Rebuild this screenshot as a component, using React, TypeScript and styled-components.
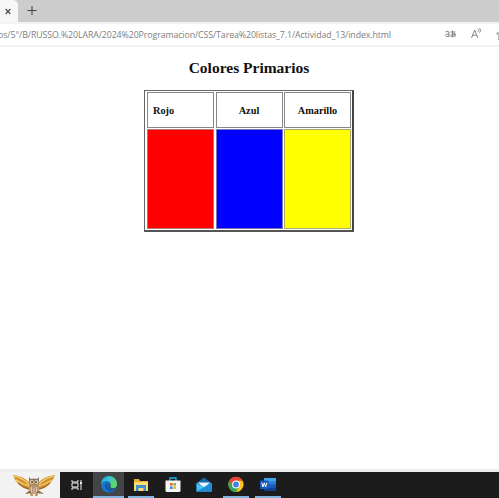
import React from "react";
import styled, { createGlobalStyle } from "styled-components";

const GlobalStyle = createGlobalStyle`
  * { box-sizing: border-box; }
  body { margin: 0; background: #fff; overflow: hidden; }
`;

const Window = styled.div`
  width: 499px;
  height: 498px;
  display: flex;
  flex-direction: column;
  overflow: hidden;
  background: #fff;
`;

const TabStrip = styled.div`
  height: 22px;
  flex: none;
  display: flex;
  background: #cdcdcd;
`;

const Tab = styled.div`
  width: 18px;
  height: 22px;
  background: #f7f7f7;
  border-top-right-radius: 5px;
`;

const NewTab = styled.div`
  width: 28px;
  height: 22px;
`;

const AddressBar = styled.div`
  height: 25px;
  flex: none;
  display: flex;
  align-items: center;
  border-top: 2px solid #f3f3f3;
  border-bottom: 2px solid #f3f3f3;
`;

const Url = styled.div`
  width: 391px;
  flex: none;
  display: flex;
  justify-content: flex-end;
  white-space: nowrap;
  font: 8.8px/16px "Open Sans", sans-serif;
  letter-spacing: -0.1px;
  color: #808080;
`;

const Tools = styled.div`
  width: 108px;
  height: 21px;
  overflow: hidden;
`;

const Page = styled.main`
  flex: 1;
  display: flex;
  flex-direction: column;
  align-items: center;
  padding-right: 1px;
  font-family: "Liberation Serif", "Times New Roman", serif;
  color: #111;
`;

const Title = styled.h1`
  margin: 12px 0 13px;
  font-size: 15.5px;
  line-height: 18px;
  font-weight: 700;
`;

const ColorTable = styled.div`
  width: 210px;
  height: 142px;
  display: grid;
  grid-template-columns: 67px 67px 67px;
  grid-template-rows: 36px 100px;
  column-gap: 1.5px;
  row-gap: 1px;
  padding: 1px 0 0 2px;
  border: 1px solid #666;
  border-right: 2px solid #444;
  border-bottom: 2px solid #555;
`;

const HeadCell = styled.div<{ $left?: boolean }>`
  display: flex;
  align-items: center;
  justify-content: ${(p) => (p.$left ? "flex-start" : "center")};
  padding-left: ${(p) => (p.$left ? 5 : 0)}px;
  border: 1px solid #888;
  font-size: 10.3px;
  font-weight: 700;
`;

const Swatch = styled.div<{ $color: string; $edge: string }>`
  background: ${(p) => p.$color};
  border: 1px solid ${(p) => p.$edge};
`;

const PageEdge = styled.div`
  height: 3px;
  flex: none;
  background: #ececec;
`;

const Taskbar = styled.footer`
  height: 26px;
  flex: none;
  display: flex;
  background: #1c1c1c;
`;

const SearchBox = styled.div`
  width: 60px;
  background: #f2f2f2;
  display: flex;
  padding-left: 12px;
`;

const TaskView = styled.div`
  width: 33px;
  display: flex;
  justify-content: center;
`;

const Task = styled.div<{ $active?: boolean; $open?: boolean }>`
  width: ${(p) => (p.$active ? 31 : 26)}px;
  margin-right: ${(p) => (p.$active ? 4 : 5.7)}px;
  display: flex;
  justify-content: center;
  background: ${(p) => (p.$active ? "#424446" : "transparent")};
  border-bottom: 2px solid ${(p) => (p.$open ? "#80b5e4" : "transparent")};
`;

const Picture = styled.svg`
  display: block;
  flex: none;
`;

const Owl = () => (
  <Picture width="44" height="26" viewBox="0 0 44 26">
    <g strokeLinejoin="round">
      <path d="M1 3Q12 4 19 12L17 18Q5 15 1 3Z" fill="#cf8d2e" />
      <path d="M43 3Q32 4 25 12L27 18Q39 15 43 3Z" fill="#cf8d2e" />
      <path d="M2 4Q11 6 18 13M4 8Q10 12 17 14M42 4Q33 6 26 13M40 8Q34 12 27 14" fill="none" stroke="#f0c563" strokeWidth="1.6" />
      <path d="M6 11Q11 16 17 17M38 11Q33 16 27 17" fill="none" stroke="#94642c" strokeWidth="1" />
      <path d="M18 18l-5 4 7-1M26 18l6 4-8-1" fill="#8b684a" />
      <ellipse cx="22" cy="14.5" rx="5" ry="7.5" fill="#b49272" />
      <path d="M17 5l2 2q3-1 6 0l2-2v6q-2 3-5 1-3 2-5-1Z" fill="#8b7462" />
      <circle cx="19.7" cy="10" r="2" fill="#e8d8b8" />
      <circle cx="24.3" cy="10" r="2" fill="#e8d8b8" />
      <circle cx="20" cy="10" r=".9" fill="#4b3424" />
      <circle cx="24" cy="10" r=".9" fill="#4b3424" />
      <path d="M21 11h2l-1 3Z" fill="#cb8c2b" />
      <path d="M19.5 15v5M22 16v5M24.5 15v5" stroke="#dfcbb0" strokeWidth="1" />
      <path d="M19 21v2h2M25 21v2h-2" fill="none" stroke="#b77b2d" strokeWidth="1.3" />
    </g>
  </Picture>
);

const Edge = () => (
  <Picture width="18" height="24" viewBox="0 0 18 24">
    <defs>
      <linearGradient id="edgeTop" x1="0" y1="0" x2="1" y2="0.5">
        <stop stopColor="#2197de" /><stop offset="0.5" stopColor="#36c5d2" /><stop offset="1" stopColor="#65da58" />
      </linearGradient>
    </defs>
    <circle cx="9" cy="12.5" r="8" fill="#1779ce" />
    <path d="M1 12A8 8 0 0 1 17 12Q17 16 12.5 16Q9.5 16 10.5 13.5Q11 9 6.5 9Q2.5 9 1 12Z" fill="url(#edgeTop)" />
    <path d="M7 10Q3 14 7 18Q11 22 16 16.5Q11 19 8.5 15.5Q7 13 7 10Z" fill="#1459a5" />
    <path d="M8.5 11Q11 11 10.3 14Q9.8 16 12.5 16.3Q15 16.5 16.5 15.5Q14.6 17.5 11.7 17Q8 16 8.5 11Z" fill="#424446" />
  </Picture>
);

const Explorer = () => (
  <Picture width="16" height="24" viewBox="0 0 16 24">
    <path d="M1 7h5l1 2h8v10H1Z" fill="#e7ad36" />
    <path d="M1 10h14v9H1Z" fill="#ffdc73" />
    <path d="M3 13h10v6h-2.5v-3h-5v3H3Z" fill="#3c91cc" />
  </Picture>
);

const Store = () => (
  <Picture width="16" height="24" viewBox="0 0 16 24">
    <path d="M5 9V6h6v3" fill="none" stroke="#25aeea" strokeWidth="1.4" />
    <path d="M.5 8.5h15v10q0 1.5-1.5 1.5H2Q.5 20 .5 18.5Z" fill="#f5f5f5" />
    <path d="M5 11h2.6v2.6H5Z" fill="#ef5737" /><path d="M8.4 11H11v2.6H8.4Z" fill="#83b72d" />
    <path d="M5 14.4h2.6V17H5Z" fill="#2095d7" /><path d="M8.4 14.4H11V17H8.4Z" fill="#f5b31b" />
  </Picture>
);

const Mail = () => (
  <Picture width="16" height="24" viewBox="0 0 16 24">
    <path d="M.5 11 8 5.5l7.5 5.5v8.5H.5Z" fill="#1566aa" />
    <path d="M2 10.5h12L8 16Z" fill="#e9f6ff" />
    <path d="M.5 11 8 15l7.5-4v8.5H.5Z" fill="#45c3f5" />
    <path d="M.5 19.5 15.5 11v8.5Z" fill="#208bd7" />
  </Picture>
);

const Chrome = () => (
  <Picture width="16" height="24" viewBox="0 0 16 24">
    <circle cx="8" cy="12.5" r="7.6" fill="#fbc31b" />
    <path d="M1.4 8.7A7.6 7.6 0 0 1 14.6 8.7H8L4.7 14.4Z" fill="#e74435" />
    <path d="M1.4 8.7A7.6 7.6 0 0 0 8 20.1L11.3 14.4 8 16.3 4.7 14.4Z" fill="#34a553" />
    <circle cx="8" cy="12.5" r="3.9" fill="#fff" />
    <circle cx="8" cy="12.5" r="2.9" fill="#3f81e4" />
  </Picture>
);

const Word = () => (
  <Picture width="16" height="24" viewBox="0 0 16 24">
    <rect x="4" y="6" width="12" height="13" rx="1" fill="#2b7cd3" />
    <path d="M4 6h12v3.3H4Z" fill="#41a5ee" /><path d="M4 12.5h12V16H4Z" fill="#185abd" />
    <path d="M4 16h12v3H4Z" fill="#103f91" />
    <rect y="8.5" width="8.5" height="8.5" rx=".8" fill="#185abd" />
    <path d="m1.8 10.7 1.1 4.2 1.4-4 1.4 4 1.1-4.2" fill="none" stroke="#fff" strokeWidth="1" />
  </Picture>
);

export default function App() {
  return (
    <>
      <GlobalStyle />
      <Window>
        <TabStrip>
          <Tab>
            <Picture width="18" height="22" viewBox="0 0 18 22">
              <path d="m5.6 9 4.8 5m0-5-4.8 5" stroke="#444" strokeWidth="1.1" />
            </Picture>
          </Tab>
          <NewTab>
            <Picture width="28" height="22" viewBox="0 0 28 22">
              <path d="M9.5 10.5h9M14 6v9" stroke="#444" strokeWidth="1.1" />
            </Picture>
          </NewTab>
        </TabStrip>
        <AddressBar>
          <Url>os/5°/B/RUSSO.%20LARA/2024%20Programacion/CSS/Tarea%20listas_7.1/Actividad_13/index.html</Url>
          <Tools>
            <Picture width="108" height="21" viewBox="0 0 108 21" fill="none" stroke="#777" strokeWidth=".9">
              <path d="M54.5 8q3.5-1.8 3.5 1v4M58 10q-3.5-.3-3.5 1.5 0 2 3.5.5M59.5 8h5M61.5 6.5q-.4 3.5.5 6.5M64 9q-1 4-3.5 4-2-1.5 1-3 3.5-1 3.2 1.5-.3 1-1.7 1.5" />
              <path d="m80.5 14 3.2-8 3.2 8M81.7 11.2h4M87 5.2q1.2 1.3 0 2.6M88.5 4.2q2.4 2.2 0 4.6" />
              <path d="m111 5.5-1.7 3.2-3.7.6 2.7 2.6-.6 3.7 3.3-1.7" />
            </Picture>
          </Tools>
        </AddressBar>
        <Page>
          <Title>Colores Primarios</Title>
          <ColorTable>
            <HeadCell $left>Rojo</HeadCell>
            <HeadCell>Azul</HeadCell>
            <HeadCell>Amarillo</HeadCell>
            <Swatch $color="#ff0000" $edge="#b77777" />
            <Swatch $color="#0000ff" $edge="#7777bd" />
            <Swatch $color="#ffff00" $edge="#aaaa68" />
          </ColorTable>
        </Page>
        <PageEdge />
        <Taskbar>
          <SearchBox><Owl /></SearchBox>
          <TaskView>
            <Picture width="14" height="26" viewBox="0 0 14 26" fill="none" stroke="#eee">
              <path d="M2 8v2h6V8M2 18v-2h6v2M2 11h6v4H2ZM11 8v10" />
              <path d="M10 10h2v2h-2Z" fill="#eee" stroke="none" />
            </Picture>
          </TaskView>
          <Task $active $open><Edge /></Task>
          <Task $open><Explorer /></Task>
          <Task><Store /></Task>
          <Task><Mail /></Task>
          <Task $open><Chrome /></Task>
          <Task $open><Word /></Task>
        </Taskbar>
      </Window>
    </>
  );
}
